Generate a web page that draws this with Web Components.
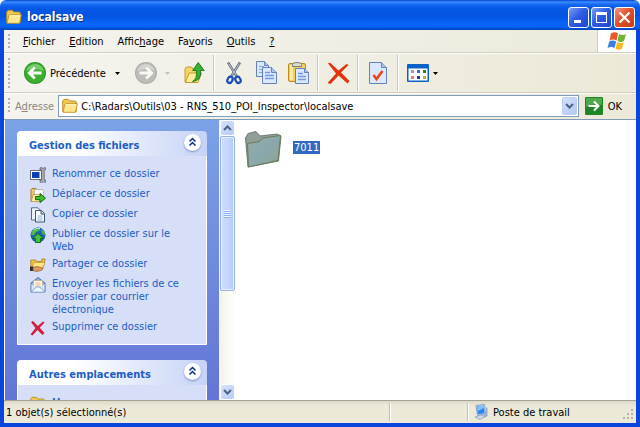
<!DOCTYPE html>
<html lang="fr">
<head>
<meta charset="utf-8">
<title>localsave</title>
<style>
  html, body { height: 100%; margin: 0; }
  body { font: 11px/13px "DejaVu Sans Condensed", "Liberation Sans", sans-serif; color: #000; background: #fff; overflow: hidden; }
</style>
</head>
<body>
<xp-window>
  <xp-titlebar slot="title">localsave</xp-titlebar>
  <xp-menubar slot="bars"></xp-menubar>
  <xp-toolbar slot="bars"></xp-toolbar>
  <xp-address slot="bars"></xp-address>
  <xp-sidebar slot="side">
    <xp-panel heading="Gestion des fichiers">
      <xp-task icon="rename">Renommer ce dossier</xp-task>
      <xp-task icon="move">Déplacer ce dossier</xp-task>
      <xp-task icon="copydoc">Copier ce dossier</xp-task>
      <xp-task icon="publish">Publier ce dossier sur le Web</xp-task>
      <xp-task icon="share">Partager ce dossier</xp-task>
      <xp-task icon="mail">Envoyer les fichiers de ce dossier par courrier électronique</xp-task>
      <xp-task icon="remove">Supprimer ce dossier</xp-task>
    </xp-panel>
    <xp-panel heading="Autres emplacements">
      <xp-task icon="folder">M</xp-task>
    </xp-panel>
  </xp-sidebar>
  <xp-folder-item slot="main">7011</xp-folder-item>
  <xp-statusbar slot="status"></xp-statusbar>
</xp-window>

<script>
const svg = (w, h, body, vb) => `<svg width="${w}" height="${h}" viewBox="${vb || `0 0 ${w} ${h}`}" aria-hidden="true">${body}</svg>`;

const page = (x, y, w, h, f) => `<path d="M${x} ${y}h${w - f}l${f} ${f}v${h - f}h-${w}z" fill="#dbe8fb" stroke="#6482bc"/><path d="M${x + w - f} ${y}v${f}h${f}" fill="#a9c3f0" stroke="#6482bc"/>`;

const icons = {
  folder: svg(16, 16, `<path d="M.7 13.500v-10.500l1.300-1.700h4.300l1.500 1.700h5.700l.8 1v9.500z" fill="#f2c84e" stroke="#b98a24" stroke-width=".9"/><path d="M1 14.300l1.800-7.600 1-1h11.500l-1.800 8.600z" fill="#ffe78c" stroke="#bf9129" stroke-width=".9"/><path d="M3.800 6.800h10.200" stroke="#fffad2"/>`),
  back: svg(24, 24, `<circle cx="12" cy="12" r="11" fill="#2c9a25"/><circle cx="12" cy="12" r="10" fill="#3cae30"/><path d="M3 10a9.300 9.300 0 0 1 18 0q-8-4-18 0z" fill="#8ed67f" opacity=".75"/><path d="M18.500 12h-12M11.800 6.500l-5.500 5.500 5.500 5.500" fill="none" stroke="#fff" stroke-width="2.800"/>`),
  forward: svg(24, 24, `<circle cx="12" cy="12" r="11" fill="#aeaeaa"/><circle cx="12" cy="12" r="10" fill="#bcbcb9"/><path d="M3 10a9.300 9.300 0 0 1 18 0q-8-4-18 0z" fill="#d8d8d5" opacity=".8"/><path d="M5.500 12h12M12.200 6.500l5.500 5.500-5.500 5.500" fill="none" stroke="#f7f7f4" stroke-width="2.800"/>`),
  up: svg(24, 24, `<path d="M3 21V8l1.500-2h5l1.500 2h6v4l-4 9z" fill="#f6d568" stroke="#c59a2c"/><path d="M3.500 21.500L7 12h12.500l-3.500 9.500z" fill="#ffeb9c" stroke="#c59a2c"/><path d="M10.500 20.500q5-2.500 3.800-11h-3.600l5.500-8 6 8h-3.500q.8 10.500-8.200 11z" fill="#38b032" stroke="#17761a" stroke-width=".9"/>`),
  cut: svg(24, 24, `<path d="M6 1.500l8.500 13.500M18 1.500L9.500 15" stroke="#626c7c" stroke-width="2.400"/><path d="M6.500 2.500l8 12.500M17.500 2.500L9.500 15" stroke="#c8d0da" stroke-width=".9"/><ellipse cx="8" cy="18.800" rx="2.400" ry="3.300" transform="rotate(28 8 18.800)" fill="none" stroke="#174fb2" stroke-width="2.300"/><ellipse cx="16" cy="18.800" rx="2.400" ry="3.300" transform="rotate(-28 16 18.800)" fill="none" stroke="#174fb2" stroke-width="2.300"/>`),
  copy: svg(24, 24, page(2.5, .5, 12, 15, 4) + `<path d="M5 5.500h5M5 8.500h6M5 11.500h6" stroke="#7fa6e6"/>` + page(8.5, 6.5, 14, 16, 5) + `<path d="M11 11.500h5M11 14.500h9M11 17.500h9" stroke="#6f9ae0" stroke-width="1.300"/>`),
  paste: svg(24, 24, `<rect x="2.500" y="2.500" width="17" height="18" rx="1.500" fill="#f2cf60" stroke="#b98b20"/><path d="M4 4h3v15h-3z" fill="#ffe99a"/><path d="M6.500 5.500v-2q0-2 4.500-2t4.500 2v2z" fill="#dcdcd4" stroke="#7f7f78"/>` + page(9.5, 7.5, 13, 15, 4) + `<path d="M12 12.500h5M12 15.500h8M12 18.500h8" stroke="#6f9ae0" stroke-width="1.300"/>`),
  del: svg(24, 24, `<path d="M2 2.500q1.500-1.500 3.500.5l7 6.500 8-6.500 2 1-7.500 7.500 8.500 8.500-2 2.500-9-8-8 8.500-3-1 8.500-9.500z" fill="#e2330e"/>`),
  props: svg(24, 24, page(3.5, 1.500, 17, 21, 5) + `<path d="M7.500 14l3 4 6-8" fill="none" stroke="#f0401c" stroke-width="2.600"/>`),
  views: svg(24, 24, `<rect x="1" y="3" width="22" height="18" rx="1" fill="#0a60c4"/><rect x="2.500" y="7.500" width="19" height="12" fill="#fff"/><path d="M5 9h3v3h-3z" fill="#a58ec4"/><path d="M11 9h3v3h-3z" fill="#3672d4"/><path d="M17 9h3v3h-3z" fill="#1a8b1f"/><path d="M5 15h3v3h-3z" fill="#f07c64"/><path d="M11 15h3v3h-3z" fill="#183ea6"/><path d="M17 15h3v3h-3z" fill="#d5a70a"/>`),
  rename: svg(16, 16, `<path d="M.5 3.500h11v9h-11z" fill="#fff" stroke="#65686f"/><path d="M2 5h7.500v6h-7.500z" fill="#0a3fb4"/><path d="M10 .8h2.300l.7 1 .7-1h2v2h-1.500v10.200h1.500v2.200h-2l-.7-.7-.7.700h-2.300v-2.200h1.700v-10.200h-1.700z" fill="#b4b6bd" stroke="#5b5e67" stroke-width=".8"/>`),
  move: svg(16, 16, `<path d="M1 14.500v-12l1-1h4l1 1.500h5.500v4z" fill="#eec662" stroke="#a77a25"/><path d="M4.500 2.500h8l1 2v6h-9z" fill="#fff" stroke="#a0a3a8" stroke-width=".7"/><path d="M1 14.500l2.500-7h8l-2 7z" fill="#ffe9a4" stroke="#b98d35" stroke-width=".7"/><path d="M5.500 9.500h4.500v-3l5.500 4.700-5.500 4.500v-3h-4.500z" fill="#3fc02c" stroke="#146b15"/>`),
  copydoc: svg(16, 16, `<path d="M1.500.8h6.500l2.500 2.500v9.700h-9z" fill="#eff5ff" stroke="#4d6a8c"/><path d="M5.500 3.500h6l3 3v8.500h-9z" fill="#fff" stroke="#3b516c"/><path d="M11 3.500v3.500h3.500" fill="#cbdcf0" stroke="#3b516c"/><path d="M7.500 9h5M7.500 11h5M7.500 13h5" stroke="#85addc"/>`),
  publish: svg(16, 16, `<circle cx="8" cy="8" r="7.500" fill="#1e5fc0"/><path d="M2 4q3-4 7-3.500l1 3-4 1.500-2 3.500-3-1zM11 2q4 2 4.300 6l-3-1z" fill="#4cba4b"/><path d="M4 3q3-2.500 6-1.500" stroke="#b9e4f4" fill="none"/><path d="M8 6.500l5.500 5h-3v4h-5v-4h-3z" fill="#43c336" stroke="#0f6b1a"/>`),
  share: svg(16, 16, `<path d="M.8 11.500v-8.500h5l1 1.500h5v-2.500h3.400l-2.500 9.500z" fill="#f1c244" stroke="#a87c1c" stroke-width=".8"/><path d="M1.500 11.500l2.500-6h11l-2.500 6z" fill="#ffe480" stroke="#bf942e" stroke-width=".7"/><path d="M0 9.500h3.500v4.500h-3.500z" fill="#31313b"/><path d="M3 10.500l4-1 6 1.500-1 2-5 1.500-4-.8z" fill="#dc9a63" stroke="#8d4c24" stroke-width=".6"/>`),
  mail: svg(16, 16, `<path d="M1 6l7-5.500 7 5.500v9h-14z" fill="#91aede" stroke="#5573a8"/><path d="M3.500 3.500h9v6.500h-9z" fill="#fff8e7" stroke="#b9a987" stroke-width=".7"/><path d="M5.500 6h5M5.500 8h5" stroke="#e0a86a" stroke-width=".8"/><path d="M1.500 7l6.500 5 6.500-5v7.500h-13z" fill="#d4e6fb"/><path d="M1.500 14.500l5-4.500h3l5 4.500" fill="#eef6ff" stroke="#7593c7" stroke-width=".8"/>`),
  remove: svg(16, 16, `<path d="M1 2l2-1 4.800 5 5.200-4.500 1.500 1-4.800 5.300 4.800 5.200-2 2-5-5-5 5.500-2-1 5-6.500z" fill="#cf1d3c"/>`),
  big: svg(40, 40, `<defs><linearGradient id="g" x1="0" y1="0" x2="1" y2="1"><stop offset="0" stop-color="#97a9a0"/><stop offset=".5" stop-color="#88a9b0"/><stop offset="1" stop-color="#93a286"/></linearGradient></defs><path d="M4 37l-2.500-29 2.500-4.500 8-2 4 4.500 17-2 4 2-2.500 25z" fill="#8f9f98" stroke="#707c70"/><path d="M4.500 37l-1-23.500 12-2 3-3.500 18-2.500-2.500 25z" fill="url(#g)" stroke="#6b7a58"/>`),
  computer: svg(16, 16, `<path d="M3 1.500l8.500-1 1 9.500-8 1.500z" fill="#c9dcef" stroke="#7fa2cc"/><path d="M4 2.500l6.800-.8.700 7.500-6.500 1z" fill="#2a86ee"/><path d="M4 2.500l6.800-.8.200 2.300-6 3z" fill="#7cc4fb"/><path d="M13 3l1.500 1v8l-3.500 2v-3l2-1z" fill="#9badd2"/><path d="M2 13l6-2 4 1.500-5 3z" fill="#cfd8e8" stroke="#8090b0" stroke-width=".6"/>`),
  flag: svg(22, 20, `<path d="M5 2.500q4-2.500 7 0l-1.500 7q-3.500-2-7 0z" fill="#e8582a"/><path d="M13 3q4 2 7 0l-2 7q-3 1.800-6.500 0z" fill="#6db52c"/><path d="M3.200 10.500q3.500-2 7 0l-1.700 6.500q-3-2.200-7 0z" fill="#3d7fdc"/><path d="M11.200 11q3.500 2 6.500.2l-1.700 6.500q-3 2-6.500 0z" fill="#f4ba22"/>`),
  caret: svg(5, 3, `<path d="M0 0h5l-2.500 3z" fill="currentColor"/>`),
  chevDown: svg(9, 6, `<path d="M1 1l3.500 3.500L8 1" fill="none" stroke="#4d6185" stroke-width="2"/>`),
  chevUp: svg(9, 6, `<path d="M1 5l3.500-3.500L8 5" fill="none" stroke="#4d6185" stroke-width="2"/>`),
  collapse: svg(9, 10, `<path d="M1.500 4.500l3-3 3 3M1.500 8.500l3-3 3 3" fill="none" stroke="#0c2f8c" stroke-width="1.500"/>`),
  go: svg(18, 18, `<rect width="18" height="18" rx="1" fill="#1f8425"/><path d="M1 1h16v7q-8-2-16 2z" fill="#4fa84c"/><path d="M3.500 9h10M9 4.500l4.500 4.500-4.500 4.500" fill="none" stroke="#fff" stroke-width="2"/>`),
};

const base = `
  :host, *, *::before { box-sizing: border-box; }
  button { font: inherit; color: inherit; background: none; border: 0; margin: 0; padding: 0; white-space: nowrap; }
  svg { display: block; flex: none; }
  u { text-underline-offset: 1px; }
  .grip { flex: none; width: 2px; align-self: stretch; margin: 4px 0; background: repeating-linear-gradient(#b5b2a3 0 2px, transparent 2px 4px); }
`;

function define(name, css, html) {
  customElements.define(name, class extends HTMLElement {
    constructor() {
      super();
      this.attachShadow({ mode: 'open' });
    }
    connectedCallback() {
      const t = document.createElement('template');
      t.innerHTML = `<style>${base}${css}</style>` + (typeof html === 'function' ? html(this) : html);
      this.shadowRoot.replaceChildren(t.content.cloneNode(true));
    }
  });
}

define('xp-titlebar', `
  :host { display: flex; align-items: center; gap: 5px; height: 30px; padding: 4px 5px 0 6px; border-radius: 6px 6px 0 0; color: #fff;
    background: linear-gradient(#0a3fd0 0, #3a90ff 2px, #1c6cf4 4px, #0558e6 8px, #0453e0 16px, #0866fa 24px, #0560f0 27px, #0340b8 30px); }
  h1 { flex: 1; margin: 0; font: bold 12px/16px "DejaVu Sans Condensed", sans-serif; text-shadow: 1px 1px #0b2a80; }
  .ctl { display: flex; gap: 2px; }
  button { display: grid; place-items: center; width: 21px; height: 21px; border: 1px solid #fff; border-radius: 3px; background: linear-gradient(135deg, #7b9ef5, #2f5de4 45%, #1b46d2); }
  .close { background: linear-gradient(135deg, #f09a80, #e0512b 45%, #c63a14); }
`, `${icons.folder}<h1><slot></slot></h1><div class="ctl">
  <button aria-label="Réduire">${svg(15, 15, '<path d="M3 10h7v3h-7z" fill="#fff"/>')}</button>
  <button aria-label="Agrandir">${svg(15, 15, '<path d="M2 2h11v11h-11zM3 5v7h9v-7z" fill="#fff" fill-rule="evenodd"/>')}</button>
  <button class="close" aria-label="Fermer">${svg(15, 15, '<path d="M2.500 2.500l10 10M12.500 2.500l-10 10" stroke="#fff" stroke-width="2.200"/>')}</button></div>`);

define('xp-menubar', `
  :host { display: flex; height: 23px; padding-left: 4px; border-bottom: 1px solid #d0cdbc; background: linear-gradient(90deg, #f4f3ee, #eceadb); }
  nav { flex: 1; display: flex; margin-left: 6px; }
  nav button { padding: 0 7px; }
  .flag { display: grid; place-items: center; width: 39px; background: #fff; border-left: 1px solid #d0cdbc; }
`, `<span class="grip"></span><nav>
  <button><u>F</u>ichier</button><button><u>E</u>dition</button><button>Affic<u>h</u>age</button><button>Fa<u>v</u>oris</button><button><u>O</u>utils</button><button><u>?</u></button>
  </nav><span class="flag">${icons.flag}</span>`);

define('xp-tool', `
  :host { display: flex; align-items: center; align-self: stretch; }
  button { display: flex; align-items: center; gap: 3px; height: 28px; padding: 0 2px; }
  .drop { width: 16px; justify-content: center; }
  :host([wide]) .drop { width: 20px; }
  :host([tight]) .drop { width: 8px; padding: 0; }
  button:disabled { color: #c5c2b4; }
`, el => `<button aria-label="${el.getAttribute('label')}" ${el.hasAttribute('off') ? 'disabled' : ''}>${icons[el.getAttribute('icon')]}<slot></slot></button>` +
  (el.hasAttribute('drop') ? `<button class="drop" aria-label="Options" ${el.hasAttribute('off') ? 'disabled' : ''}>${icons.caret}</button>` : ''));

define('xp-toolbar', `
  :host { display: flex; align-items: center; gap: 4px; height: 40px; padding-left: 4px; border-top: 1px solid #fff; border-bottom: 1px solid #d0cdbc; background: linear-gradient(90deg, #f4f3ee, #ece9d8); }
  .grip { margin-right: 7px; }
  hr { width: 2px; height: 36px; margin: 0 1px; border: 0; border-left: 1px solid #c9c6b5; background: #fff; }
`, `<span class="grip"></span>
  <xp-tool icon="back" label="Précédente" drop wide>Précédente</xp-tool>
  <xp-tool icon="forward" label="Suivante" drop off></xp-tool>
  <xp-tool icon="up" label="Dossier parent"></xp-tool><hr>
  <xp-tool icon="cut" label="Couper"></xp-tool>
  <xp-tool icon="copy" label="Copier"></xp-tool>
  <xp-tool icon="paste" label="Coller"></xp-tool><hr>
  <xp-tool icon="del" label="Supprimer"></xp-tool><hr>
  <xp-tool icon="props" label="Propriétés"></xp-tool><hr>
  <xp-tool icon="views" label="Affichage" drop tight></xp-tool>`);

define('xp-address', `
  :host { display: flex; align-items: center; height: 26px; padding: 0 14px 1px 4px; border-top: 1px solid #fff; background: linear-gradient(90deg, #f4f3ee, #ece9d8); }
  label { margin: 0 4px 0 5px; color: #8a8880; }
  .combo { flex: 1; min-width: 0; display: flex; align-items: center; height: 22px; padding: 1px 1px 1px 3px; border: 1px solid #7f9db9; background: #fff; }
  input { flex: 1; min-width: 0; font: inherit; color: #000; border: 0; outline: 0; padding: 0 0 0 3px; background: none; }
  .drop { display: grid; place-items: center; width: 15px; height: 18px; border-radius: 2px; background: linear-gradient(135deg, #d3e0fd, #b3c8f7); border: 1px solid #bccdf5; }
  .go { display: flex; align-items: center; gap: 5px; margin-left: 6px; }
`, `<span class="grip"></span><label for="a">A<u>d</u>resse</label><div class="combo">${icons.folder}<input id="a" type="text" spellcheck="false" value="C:\\Radars\\Outils\\03 - RNS_510_POI_Inspector\\localsave"><button class="drop" aria-label="Liste des adresses">${icons.chevDown}</button></div><button class="go">${icons.go}OK</button>`);

define('xp-task', `
  :host { display: block; }
  a { display: flex; gap: 6px; min-height: 16px; color: #215dc6; text-decoration: none; }
`, el => `<a href="#">${icons[el.getAttribute('icon')]}<span><slot></slot></span></a>`);

define('xp-panel', `
  :host { display: block; flex: none; }
  header { display: flex; align-items: center; height: 25px; padding: 0 6px 0 12px; border-radius: 4px 4px 0 0; background: linear-gradient(90deg, #fff 30%, #c6d3f7); }
  h2 { flex: 1; margin: 0; padding-top: 3px; font: inherit; font-weight: bold; color: #215dc6; }
  header button { display: grid; place-items: center; width: 17px; height: 17px; margin-bottom: 3px; border-radius: 50%; background: #fff; box-shadow: 0 1px 2px #7d8fc0; }
  div { display: flex; flex-direction: column; gap: 4px; padding: 11px 24px 8px 12px; border: 1px solid #fff; border-top: 0; background: #d6dff7; }
`, el => `<header><h2>${el.getAttribute('heading')}</h2><button aria-label="Réduire">${icons.collapse}</button></header><div><slot></slot></div>`);

define('xp-sidebar', `
  :host { display: flex; min-height: 0; overflow: hidden; }
  .pane { width: 214px; display: flex; flex-direction: column; gap: 15px; padding: 11px 12px 0 12px; overflow: hidden; background: linear-gradient(#7ba2e7, #6375d6); }
  .bar { width: 17px; display: flex; flex-direction: column; padding: 0 1px; background: linear-gradient(90deg, #f3f3ee, #fefefb); }
  .bar button { flex: none; display: grid; place-items: center; height: 16px; border: 1px solid #fff; border-radius: 3px; background: linear-gradient(135deg, #d5e1fe, #b7ccfa); }
  .track { flex: 1; }
  .thumb { height: 155px; display: grid; place-items: center; border: 1px solid #98b1e4; border-radius: 2px; background: linear-gradient(90deg, #cfdcfe, #c3d4fd 60%, #b4c8f6); box-shadow: inset 0 0 0 1px #e8effe; }
  .thumb i { width: 7px; height: 8px; background: repeating-linear-gradient(#eef4fe 0 1px, #8cb0f8 1px 2px); }
`, `<div class="pane"><slot></slot></div><div class="bar"><button aria-label="Monter">${icons.chevUp}</button><div class="track"><div class="thumb"><i></i></div></div><button aria-label="Descendre">${icons.chevDown}</button></div>`);

define('xp-folder-item', `
  :host { display: block; padding: 10px 8px; }
  button { display: flex; align-items: center; gap: 9px; }
  span { padding: 0 1px; margin-bottom: 6px; color: #fff; background: #316ac5; }
`, `<button>${icons.big}<span><slot></slot></span></button>`);

define('xp-statusbar', `
  :host { display: flex; height: 23px; border-top: 1px solid #a5a293; background: linear-gradient(#dcd9c9, #ece9d8 5px); }
  div { display: flex; align-items: center; gap: 4px; margin: 2px 0; padding-left: 2px; }
  div + div { border-left: 1px solid #c5c2b2; box-shadow: inset 1px 0 #fff; }
  .info { flex: 1; }
  .mid { width: 78px; }
  .zone { width: 169px; padding-left: 5px; }
  .size { align-self: end; margin: 0 1px 0 auto; }
`, `<div class="info">1 objet(s) sélectionné(s)</div><div class="mid"></div><div class="zone">${icons.computer}<span>Poste de travail</span>
  <svg class="size" width="12" height="12" viewBox="0 0 12 12" aria-hidden="true"><path d="M8 0h2v2h-2zM4 4h2v2h-2zM8 4h2v2h-2zM0 8h2v2h-2zM4 8h2v2h-2zM8 8h2v2h-2z" fill="#b8b4a3"/></svg></div>`);

define('xp-window', `
  :host { display: flex; flex-direction: column; height: 100vh; }
  .frame { flex: 1; min-height: 0; display: flex; flex-direction: column; border: solid #0b46dc; border-width: 0 4px 4px; }
  .body { flex: 1; min-height: 0; display: flex; padding-left: 1px; border-top: 1px solid #7f9db9; background: #fff; }
  .main { flex: 1; }
  ::slotted([slot=side]) { flex: none; }
`, `<slot name="title"></slot><div class="frame"><slot name="bars"></slot><div class="body"><slot name="side"></slot><div class="main"><slot name="main"></slot></div></div><slot name="status"></slot></div>`);
</script>
</body>
</html>
